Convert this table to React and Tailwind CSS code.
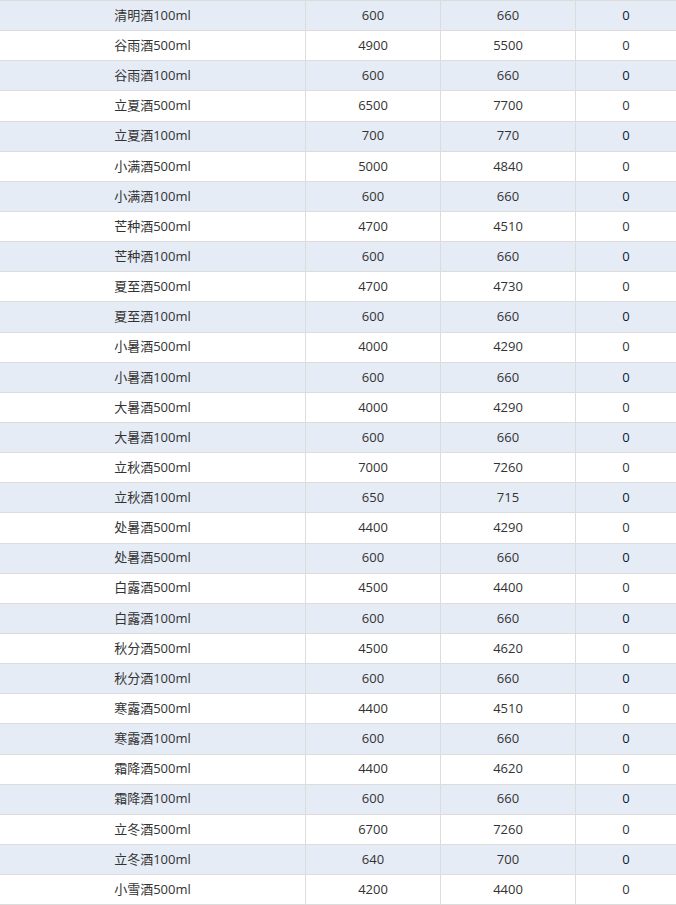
import React from 'react';

const rows = [
  ['清明酒100ml', '600', '660'],
  ['谷雨酒500ml', '4900', '5500'],
  ['谷雨酒100ml', '600', '660'],
  ['立夏酒500ml', '6500', '7700'],
  ['立夏酒100ml', '700', '770'],
  ['小满酒500ml', '5000', '4840'],
  ['小满酒100ml', '600', '660'],
  ['芒种酒500ml', '4700', '4510'],
  ['芒种酒100ml', '600', '660'],
  ['夏至酒500ml', '4700', '4730'],
  ['夏至酒100ml', '600', '660'],
  ['小暑酒500ml', '4000', '4290'],
  ['小暑酒100ml', '600', '660'],
  ['大暑酒500ml', '4000', '4290'],
  ['大暑酒100ml', '600', '660'],
  ['立秋酒500ml', '7000', '7260'],
  ['立秋酒100ml', '650', '715'],
  ['处暑酒500ml', '4400', '4290'],
  ['处暑酒500ml', '600', '660'],
  ['白露酒500ml', '4500', '4400'],
  ['白露酒100ml', '600', '660'],
  ['秋分酒500ml', '4500', '4620'],
  ['秋分酒100ml', '600', '660'],
  ['寒露酒500ml', '4400', '4510'],
  ['寒露酒100ml', '600', '660'],
  ['霜降酒500ml', '4400', '4620'],
  ['霜降酒100ml', '600', '660'],
  ['立冬酒500ml', '6700', '7260'],
  ['立冬酒100ml', '640', '700'],
  ['小雪酒500ml', '4200', '4400'],
];

const App = () => {
  return (
    <div
      className="w-[676px] bg-white text-[13px] text-[#333] border-t border-[#dcdcdc]"
      style={{ fontFamily: '"Open Sans", "Noto Sans CJK SC", sans-serif' }}
    >
      {rows.map((r, i) => (
        <div
          key={i}
          className={`flex h-[30.15px] border-b border-[#dcdcdc] ${i % 2 === 0 ? 'bg-[#e6ecf6]' : 'bg-white'}`}
        >
          <div className="w-[306px] flex items-center justify-center border-r border-[#dcdcdc]">{r[0]}</div>
          <div className="w-[135px] flex items-center justify-center border-r border-[#dcdcdc]">{r[1]}</div>
          <div className="w-[135px] flex items-center justify-center border-r border-[#dcdcdc]">{r[2]}</div>
          <div className={`flex-1 flex items-center justify-center ${i % 2 === 0 ? 'text-[#0a1a33]' : ''}`}>0</div>
        </div>
      ))}
    </div>
  );
};

export default App;
